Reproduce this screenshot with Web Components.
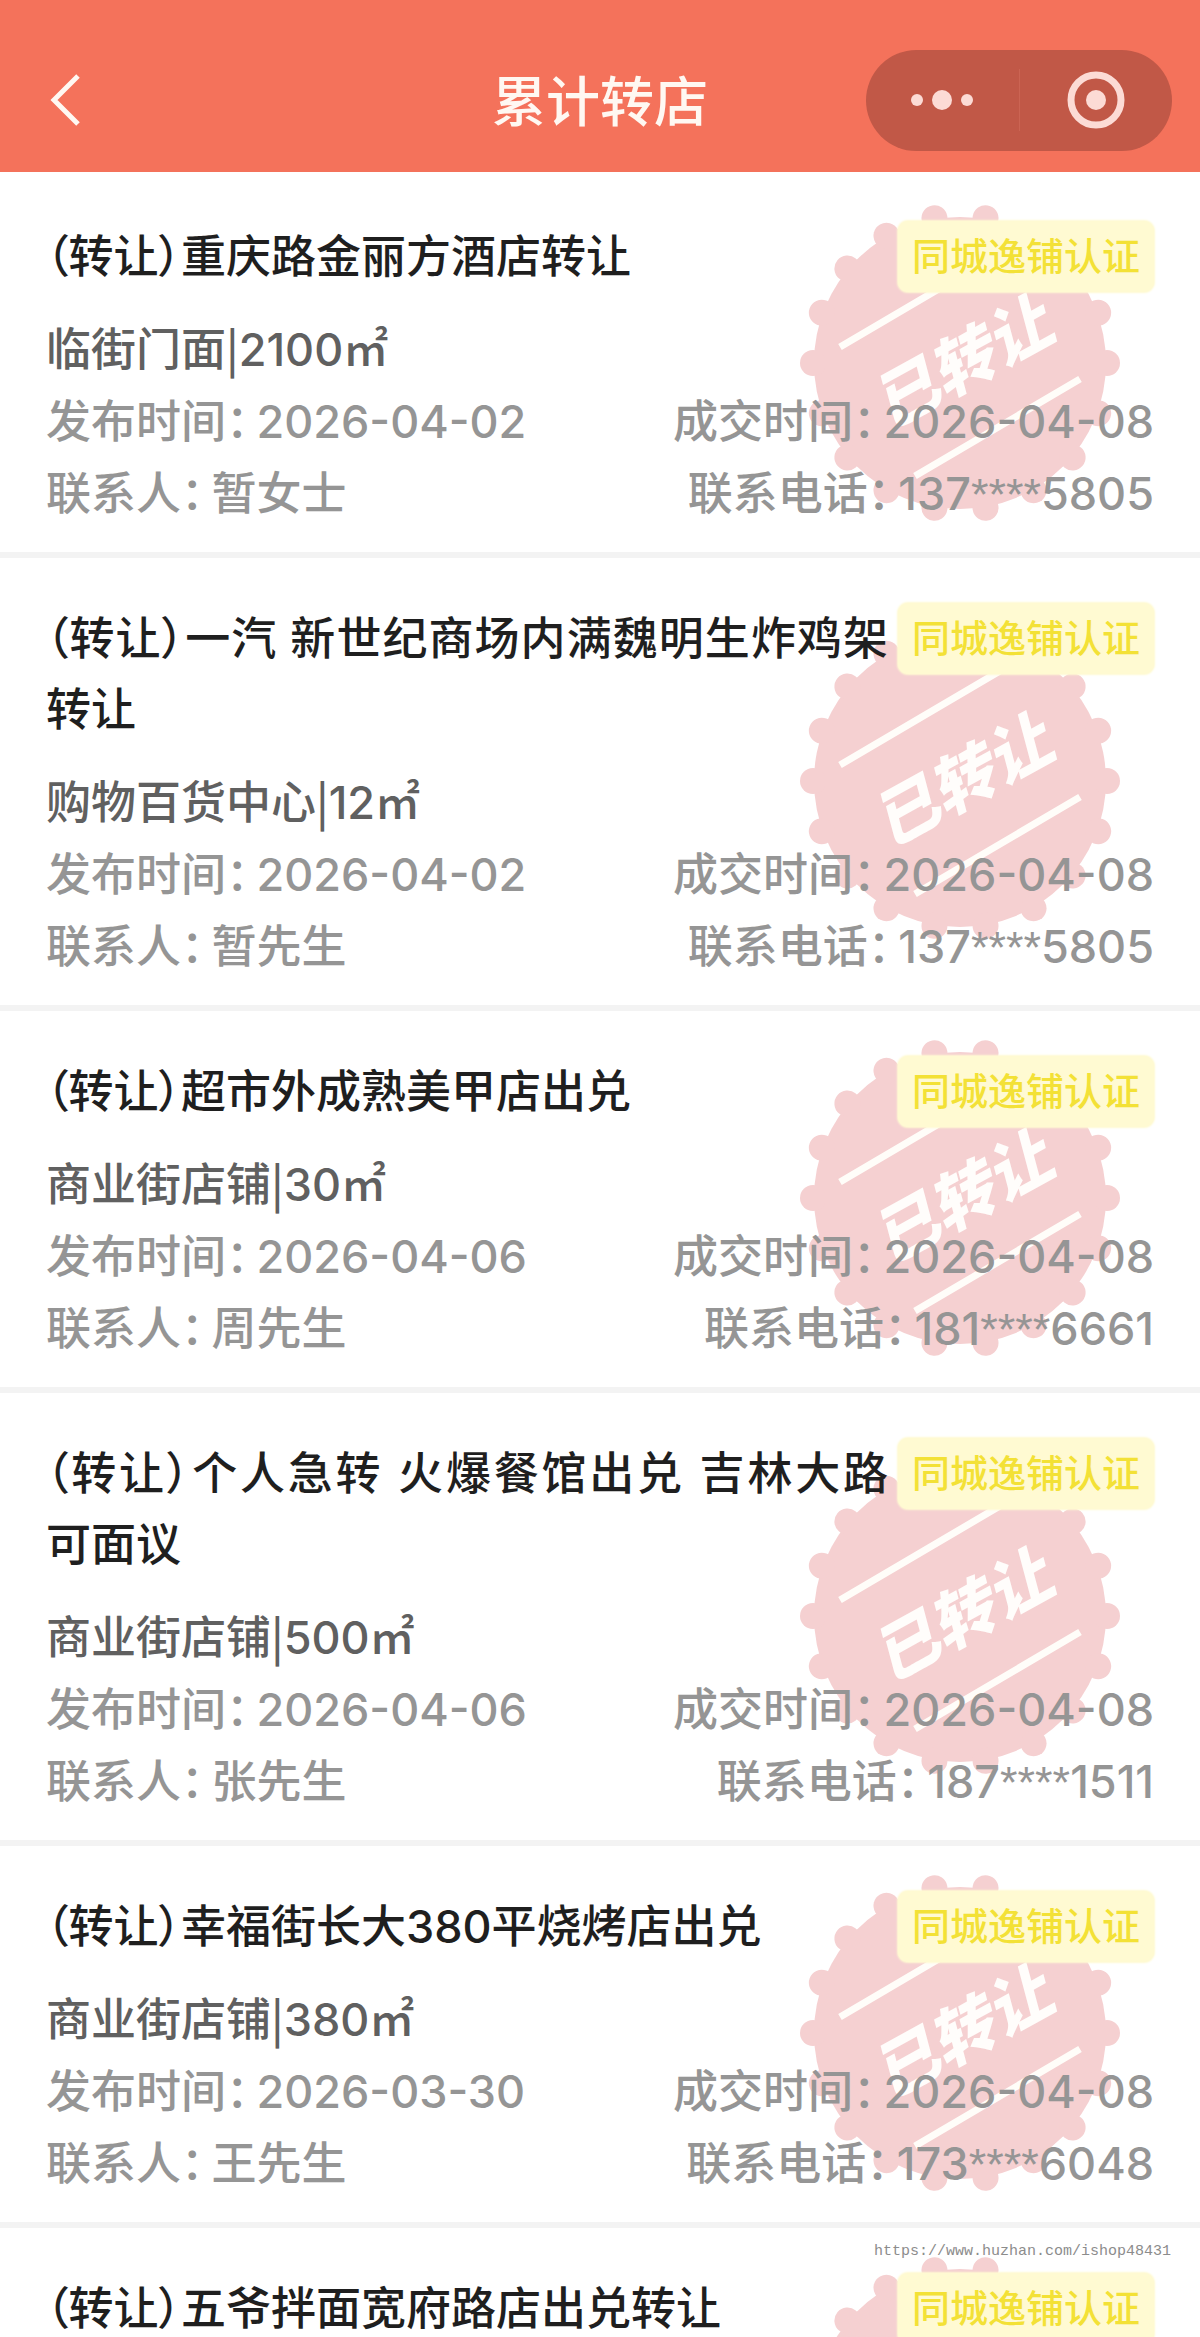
<!DOCTYPE html>
<html lang="zh-CN">
<head>
<meta charset="utf-8">
<meta name="viewport" content="width=device-width, initial-scale=1">
<title>累计转店</title>
<style>
  body {
    margin: 0;
    background: #fff;
    font-family: Inter, "Noto Sans CJK SC", sans-serif;
  }
</style>
</head>
<body>
<shop-page>
  <nav-bar slot="header">累计转店</nav-bar>
  <shop-card kind="临街门面" area="2100㎡" posted="2026-04-02" closed="2026-04-08" contact="暂女士" phone="137****5805">（转让）重庆路金丽方酒店转让</shop-card>
  <shop-card kind="购物百货中心" area="12㎡" posted="2026-04-02" closed="2026-04-08" contact="暂先生" phone="137****5805">（转让）一汽 新世纪商场内满魏明生炸鸡架转让</shop-card>
  <shop-card kind="商业街店铺" area="30㎡" posted="2026-04-06" closed="2026-04-08" contact="周先生" phone="181****6661">（转让）超市外成熟美甲店出兑</shop-card>
  <shop-card kind="商业街店铺" area="500㎡" posted="2026-04-06" closed="2026-04-08" contact="张先生" phone="187****1511">（转让）个人急转 火爆餐馆出兑 吉林大路 可面议</shop-card>
  <shop-card kind="商业街店铺" area="380㎡" posted="2026-03-30" closed="2026-04-08" contact="王先生" phone="173****6048">（转让）幸福街长大380平烧烤店出兑</shop-card>
  <shop-card>（转让）五爷拌面宽府路店出兑转让</shop-card>
  <site-mark slot="mark">https://www.huzhan.com/ishop48431</site-mark>
</shop-page>

<script>
const pageTemplate = document.createElement('template');
pageTemplate.innerHTML = `
  <style>
    :host {
      display: flex;
      flex-direction: column;
      height: 100vh;
      position: relative;
      overflow: hidden;
    }
    main {
      flex: 1;
      min-height: 0;
      padding-top: 4px;
      overflow-y: auto;
      scrollbar-width: none;
    }
  </style>
  <slot name="header"></slot>
  <main><slot></slot></main>
  <slot name="mark"></slot>
`;

class ShopPage extends HTMLElement {
  constructor() {
    super();
    this.attachShadow({ mode: 'open' });
    this.shadowRoot.appendChild(pageTemplate.content.cloneNode(true));
  }
}

const navTemplate = document.createElement('template');
navTemplate.innerHTML = `
  <style>
    :host {
      display: grid;
      grid-template-columns: 1fr auto 1fr;
      align-items: center;
      box-sizing: border-box;
      height: 172px;
      padding: 28px 28px 0;
      background: #f4725b;
      color: #fff8f2;
    }
    h1 {
      margin: 0;
      padding-top: 6px;
      font-size: 54px;
      font-weight: 500;
      line-height: 72px;
    }
    button {
      display: flex;
      align-items: center;
      justify-content: center;
      padding: 0;
      border: 0;
      background: none;
      color: inherit;
    }
    .back {
      width: 74px;
      height: 72px;
    }
    .capsule {
      justify-self: end;
      display: flex;
      align-items: center;
      width: 306px;
      height: 101px;
      border-radius: 51px;
      background: #c15847;
      color: #fcdbd5;
    }
    .capsule button {
      flex: 1;
      height: 100%;
    }
    .capsule i {
      width: 1px;
      height: 62px;
      background: #cb6453;
    }
  </style>
  <button class="back" aria-label="返回">
    <svg width="50" height="60" viewBox="0 0 50 60" fill="none" stroke="currentColor" stroke-width="5">
      <path d="M38 6 L14 30 L38 54"/>
    </svg>
  </button>
  <h1><slot></slot></h1>
  <div class="capsule">
    <button aria-label="更多">
      <svg width="62" height="24" viewBox="0 0 62 24" fill="currentColor">
        <circle cx="6" cy="12" r="6"/>
        <circle cx="31" cy="12" r="10"/>
        <circle cx="56" cy="12" r="6"/>
      </svg>
    </button>
    <i></i>
    <button aria-label="关闭">
      <svg width="58" height="58" viewBox="0 0 58 58" fill="none">
        <circle cx="29" cy="29" r="25" stroke="currentColor" stroke-width="7"/>
        <circle cx="29" cy="29" r="10" fill="currentColor"/>
      </svg>
    </button>
  </div>
`;

class NavBar extends HTMLElement {
  constructor() {
    super();
    this.attachShadow({ mode: 'open' });
    this.shadowRoot.appendChild(navTemplate.content.cloneNode(true));
  }

  connectedCallback() {
    this.shadowRoot.querySelector('.back')
    .addEventListener('click', () => history.back());
  }
}

const stampTemplate = document.createElement('template');
stampTemplate.innerHTML = `
  <style>
    :host {
      display: block;
      width: 320px;
      height: 320px;
    }
    svg {
      display: block;
    }
    text {
      font-family: "Noto Sans CJK SC", sans-serif;
      font-size: 64px;
      font-weight: 900;
      font-style: italic;
    }
  </style>
  <svg width="320" height="320" viewBox="-160 -160 320 320">
    <g class="seal" fill="#f5d0d1"><circle r="146"/></g>
    <path d="M-120 -16 L45 -113 M-45 113 L120 16" stroke="#fffdf9" stroke-width="7"/>
    <text transform="translate(2 0) rotate(-29)" y="23" text-anchor="middle" fill="#fffdfb"></text>
  </svg>
`;

class SoldStamp extends HTMLElement {
  constructor() {
    super();
    this.attachShadow({ mode: 'open' });
    this.shadowRoot.appendChild(stampTemplate.content.cloneNode(true));
    this.shadowRoot.querySelector('text').textContent = this.getAttribute('label') || '已转让';

    // scalloped edge, one bump every 20 degrees
    const seal = this.shadowRoot.querySelector('.seal');
    for (let deg = 0; deg < 360; deg += 20) {
      const bump = document.createElementNS('http://www.w3.org/2000/svg', 'circle');
      bump.setAttribute('cx', 147);
      bump.setAttribute('r', 13);
      bump.setAttribute('transform', `rotate(${deg})`);
      seal.appendChild(bump);
    }
  }
}

const badgeTemplate = document.createElement('template');
badgeTemplate.innerHTML = `
  <style>
    :host {
      display: block;
      padding: 0 14px;
      border-radius: 10px;
      background: #fffad2;
      box-shadow: 0 0 2px 1px #fffad2;
      color: #f3e136;
      font-size: 38px;
      font-weight: 500;
      line-height: 71px;
      white-space: nowrap;
    }
  </style>
  <slot></slot>
`;

class CertBadge extends HTMLElement {
  constructor() {
    super();
    this.attachShadow({ mode: 'open' });
    this.shadowRoot.appendChild(badgeTemplate.content.cloneNode(true));
  }
}

const cardTemplate = document.createElement('template');
cardTemplate.innerHTML = `
  <style>
    :host {
      display: block;
      position: relative;
      box-sizing: border-box;
      min-height: 382px;
      padding: 45px 46px 22px;
      border-bottom: 6px solid #f3f3f3;
      font-size: 45px;
      font-weight: 500;
      font-feature-settings: "palt";
    }
    sold-stamp {
      position: absolute;
      top: 50%;
      right: 80px;
      margin-top: -161px;
    }
    .head, .info, .meta {
      position: relative;
    }
    .head {
      display: flex;
      align-items: flex-start;
      gap: 10px;
      margin-bottom: 22px;
    }
    h2 {
      flex: 1;
      margin: 0;
      color: #1f1f1f;
      font-size: 45px;
      font-weight: 500;
      line-height: 71px;
      text-align: justify;
    }
    .info, .meta {
      line-height: 72px;
    }
    .info {
      color: #606060;
    }
    .meta {
      display: flex;
      justify-content: space-between;
      color: #959595;
    }
    .label {
      margin-right: 8px;
    }
    .bar {
      font-family: "Noto Sans CJK SC", sans-serif;
      line-height: 1;
    }
    .stars {
      font-family: "Liberation Sans", sans-serif;
      line-height: 1;
    }
  </style>
  <sold-stamp label="已转让"></sold-stamp>
  <div class="head">
    <h2><slot></slot></h2>
    <cert-badge>同城逸铺认证</cert-badge>
  </div>
  <div class="body"></div>
`;

class ShopCard extends HTMLElement {
  constructor() {
    super();
    this.attachShadow({ mode: 'open' });
    this.shadowRoot.appendChild(cardTemplate.content.cloneNode(true));
    if (this.hasAttribute('kind')) {
      this.renderBody();
    }
  }

  renderBody() {
    const get = (name) => this.getAttribute(name);
    const phone = get('phone').replace('****', '<span class="stars">****</span>');
    this.shadowRoot.querySelector('.body').innerHTML = `
      <div class="info">${get('kind')}<span class="bar">|</span>${get('area')}</div>
      <div class="meta">
        <div><span class="label">发布时间：</span>${get('posted')}</div>
        <div><span class="label">成交时间：</span>${get('closed')}</div>
      </div>
      <div class="meta">
        <div><span class="label">联系人：</span>${get('contact')}</div>
        <div><span class="label">联系电话：</span>${phone}</div>
      </div>
    `;
  }
}

const markTemplate = document.createElement('template');
markTemplate.innerHTML = `
  <style>
    :host {
      position: absolute;
      right: 29px;
      bottom: 75px;
      color: #8c8c8c;
      font-family: "Liberation Mono", monospace;
      font-size: 15px;
      line-height: 20px;
      pointer-events: none;
    }
  </style>
  <slot></slot>
`;

class SiteMark extends HTMLElement {
  constructor() {
    super();
    this.attachShadow({ mode: 'open' });
    this.shadowRoot.appendChild(markTemplate.content.cloneNode(true));
  }
}

window.customElements.define('sold-stamp', SoldStamp);
window.customElements.define('cert-badge', CertBadge);
window.customElements.define('nav-bar', NavBar);
window.customElements.define('shop-card', ShopCard);
window.customElements.define('site-mark', SiteMark);
window.customElements.define('shop-page', ShopPage);
</script>
</body>
</html>
